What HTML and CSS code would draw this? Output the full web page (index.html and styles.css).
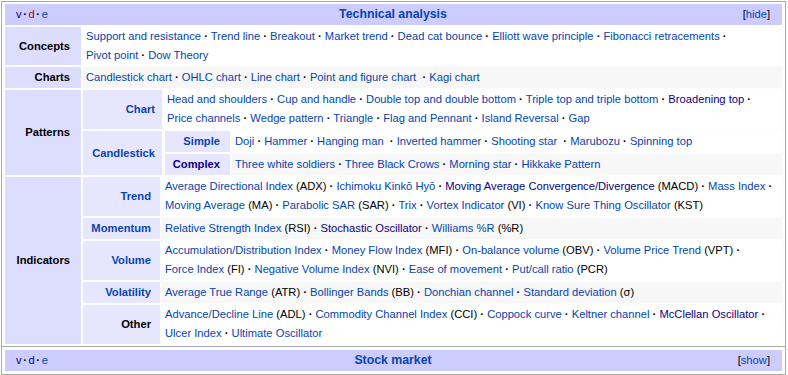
FILE: index.html
```html
<!DOCTYPE html>
<html lang="en">
<head>
<meta charset="utf-8">
<title>Technical analysis</title>
<link rel="stylesheet" href="styles.css">
</head>
<body>
<div class="navbox">
  <div class="grid">
    <div class="title">
      <div class="navbar"><a class="v">v</a><b class="nd">·</b><a class="red">d</a><b class="nd">·</b><a>e</a></div>
      <div class="ttext"><a>Technical analysis</a></div>
      <div class="toggle">[<a>hide</a>]</div>
    </div>

    <div class="group">Concepts</div>
    <div class="list"><p><span class="i"><a>Support and resistance</a>&nbsp;<b>·</b></span> <span class="i"><a>Trend line</a>&nbsp;<b>·</b></span> <span class="i"><a>Breakout</a>&nbsp;<b>·</b></span> <span class="i"><a>Market trend</a>&nbsp;<b>·</b></span> <span class="i"><a>Dead cat bounce</a>&nbsp;<b>·</b></span> <span class="i"><a>Elliott wave principle</a>&nbsp;<b>·</b></span> <span class="i"><a>Fibonacci retracements</a>&nbsp;<b>·</b></span> <span class="i"><a>Pivot point</a>&nbsp;<b>·</b></span> <span class="i"><a>Dow Theory</a></span></p></div>

    <div class="group">Charts</div>
    <div class="list even"><p><span class="i"><a>Candlestick chart</a>&nbsp;<b>·</b></span> <span class="i"><a>OHLC chart</a>&nbsp;<b>·</b></span> <span class="i"><a>Line chart</a>&nbsp;<b>·</b></span> <span class="i"><a>Point and figure chart</a>&nbsp;&nbsp;<b>·</b></span> <span class="i"><a>Kagi chart</a></span></p></div>

    <div class="group">Patterns</div>
    <div class="sub pat">
      <div class="sg"><a>Chart</a></div>
      <div class="list l2"><p><span class="i"><a>Head and shoulders</a>&nbsp;<b>·</b></span> <span class="i"><a>Cup and handle</a>&nbsp;<b>·</b></span> <span class="i"><a>Double top and double bottom</a>&nbsp;<b>·</b></span> <span class="i"><a>Triple top and triple bottom</a>&nbsp;<b>·</b></span> <span class="i"><a class="v">Broadening top</a>&nbsp;<b>·</b></span> <span class="i"><a>Price channels</a>&nbsp;<b>·</b></span> <span class="i"><a>Wedge pattern</a>&nbsp;<b>·</b></span> <span class="i"><a>Triangle</a>&nbsp;<b>·</b></span> <span class="i"><a>Flag and Pennant</a>&nbsp;<b>·</b></span> <span class="i"><a>Island Reversal</a>&nbsp;<b>·</b></span> <span class="i"><a>Gap</a></span></p></div>

      <div class="sg"><a>Candlestick</a></div>
      <div class="sub2">
        <div class="sg s3"><a>Simple</a></div>
        <div class="list"><p><span class="i"><a>Doji</a>&nbsp;<b>·</b></span> <span class="i"><a>Hammer</a>&nbsp;<b>·</b></span> <span class="i"><a>Hanging man</a>&nbsp;&nbsp;<b>·</b></span> <span class="i"><a>Inverted hammer</a>&nbsp;<b>·</b></span> <span class="i"><a>Shooting star</a>&nbsp;&nbsp;<b>·</b></span> <span class="i"><a>Marubozu</a>&nbsp;<b>·</b></span> <span class="i"><a>Spinning top</a></span></p></div>
        <div class="sg s3"><a class="v">Complex</a></div>
        <div class="list even"><p><span class="i"><a>Three white soldiers</a>&nbsp;<b>·</b></span> <span class="i"><a>Three Black Crows</a>&nbsp;<b>·</b></span> <span class="i"><a>Morning star</a>&nbsp;<b>·</b></span> <span class="i"><a>Hikkake Pattern</a></span></p></div>
      </div>
    </div>

    <div class="group">Indicators</div>
    <div class="sub ind">
      <div class="sg"><a>Trend</a></div>
      <div class="list l2"><p><span class="i"><a>Average Directional Index</a> (ADX)&nbsp;<b>·</b></span> <span class="i"><a>Ichimoku Kinkō Hyō</a>&nbsp;<b>·</b></span> <span class="i"><a class="v">Moving Average Convergence/Divergence</a> (MACD)&nbsp;<b>·</b></span> <span class="i"><a>Mass Index</a>&nbsp;<b>·</b></span> <span class="i"><a>Moving Average</a> (MA)&nbsp;<b>·</b></span> <span class="i"><a>Parabolic SAR</a> (SAR)&nbsp;<b>·</b></span> <span class="i"><a>Trix</a>&nbsp;<b>·</b></span> <span class="i"><a>Vortex Indicator</a> (VI)&nbsp;<b>·</b></span> <span class="i"><a>Know Sure Thing Oscillator</a> (KST)</span></p></div>

      <div class="sg"><a>Momentum</a></div>
      <div class="list even"><p><span class="i"><a>Relative Strength Index</a> (RSI)&nbsp;<b>·</b></span> <span class="i"><a class="v">Stochastic Oscillator</a>&nbsp;<b>·</b></span> <span class="i"><a>Williams %R</a> (%R)</span></p></div>

      <div class="sg"><a>Volume</a></div>
      <div class="list l2"><p><span class="i"><a>Accumulation/Distribution Index</a>&nbsp;<b>·</b></span> <span class="i"><a>Money Flow Index</a> (MFI)&nbsp;<b>·</b></span> <span class="i"><a>On-balance volume</a> (OBV)&nbsp;<b>·</b></span> <span class="i"><a>Volume Price Trend</a> (VPT)&nbsp;<b>·</b></span> <span class="i"><a>Force Index</a> (FI)&nbsp;<b>·</b></span> <span class="i"><a>Negative Volume Index</a> (NVI)&nbsp;<b>·</b></span> <span class="i"><a>Ease of movement</a>&nbsp;<b>·</b></span> <span class="i"><a>Put/call ratio</a> (PCR)</span></p></div>

      <div class="sg"><a>Volatility</a></div>
      <div class="list even"><p><span class="i"><a>Average True Range</a> (ATR)&nbsp;<b>·</b></span> <span class="i"><a>Bollinger Bands</a> (BB)&nbsp;<b>·</b></span> <span class="i"><a>Donchian channel</a>&nbsp;<b>·</b></span> <span class="i"><a>Standard deviation</a> (σ)</span></p></div>

      <div class="sg plain">Other</div>
      <div class="list l2"><p><span class="i"><a>Advance/Decline Line</a> (ADL)&nbsp;<b>·</b></span> <span class="i"><a>Commodity Channel Index</a> (CCI)&nbsp;<b>·</b></span> <span class="i"><a>Coppock curve</a>&nbsp;<b>·</b></span> <span class="i"><a>Keltner channel</a>&nbsp;<b>·</b></span> <span class="i"><a class="v">McClellan Oscillator</a>&nbsp;<b>·</b></span> <span class="i"><a>Ulcer Index</a>&nbsp;<b>·</b></span> <span class="i"><a>Ultimate Oscillator</a></span></p></div>
    </div>
  </div>
</div>

<div class="navbox">
  <div class="grid">
    <div class="title">
      <div class="navbar"><a class="v">v</a><b class="nd">·</b><a class="v">d</a><b class="nd">·</b><a>e</a></div>
      <div class="ttext"><a>Stock market</a></div>
      <div class="toggle">[<a>show</a>]</div>
    </div>
  </div>
</div>
</body>
</html>
```

FILE: styles.css
```css
html, body {
  margin: 0;
  padding: 0;
  background: #ffffff;
}

body {
  padding: 1px 0 0 1px;
  font-family: "Liberation Sans", Arial, Helvetica, sans-serif;
  font-size: 11.2px;
  line-height: 19px;
  color: #000000;
}

a {
  color: #0645ad;
  text-decoration: none;
}

a.v {
  color: #0b0080;
}

a.red {
  color: #ba0000;
}

p {
  margin: 0;
}

.navbox {
  width: 785px;
  box-sizing: border-box;
  border: 1px solid #aaaaaa;
  padding: 2px 3px;
  background: #fdfdfd;
}

.navbox + .navbox {
  margin-top: -1px;
  padding: 3px;
}

.grid {
  display: grid;
  grid-template-columns: 76px 1fr;
  gap: 2px;
}

.title {
  grid-column: 1 / -1;
  display: grid;
  grid-template-columns: 1fr auto 1fr;
  align-items: center;
  background: #ccccff;
  padding: 1px 12px 1px 11px;
  white-space: nowrap;
}

.navbar {
  justify-self: start;
  font-weight: normal;
}

.nd {
  font-weight: bold;
  margin: 0 1.6px;
  color: #000000;
}

.ttext {
  font-size: 12.3px;
  font-weight: bold;
  text-align: center;
}

.toggle {
  justify-self: end;
}

.group {
  background: #ddddff;
  font-weight: bold;
  white-space: nowrap;
  display: flex;
  align-items: center;
  justify-content: flex-end;
  padding: 1px 11px 1px 0;
}

.list {
  display: flex;
  align-items: center;
  padding: 0 3px;
  background: #ffffff;
}

.list.l2 {
  padding-bottom: 1px;
}

.list.even {
  background: #f7f7f7;
}

.i {
  white-space: nowrap;
}

.sub {
  display: grid;
  gap: 2px;
}

.sub.pat {
  grid-template-columns: 79px 1fr;
}

.sub.ind {
  grid-template-columns: 77px 1fr;
}

.sg {
  background: #e6e6ff;
  font-weight: bold;
  white-space: nowrap;
  display: flex;
  align-items: center;
  justify-content: flex-end;
  padding: 1px 9px 1px 0;
}

.pat > .sg {
  padding-right: 7px;
}

.sub2 {
  display: grid;
  grid-template-columns: 65px 1fr;
  gap: 2px;
  margin-left: 1px;
}

.sub2 > .sg.s3 {
  padding-right: 10px;
}
```
